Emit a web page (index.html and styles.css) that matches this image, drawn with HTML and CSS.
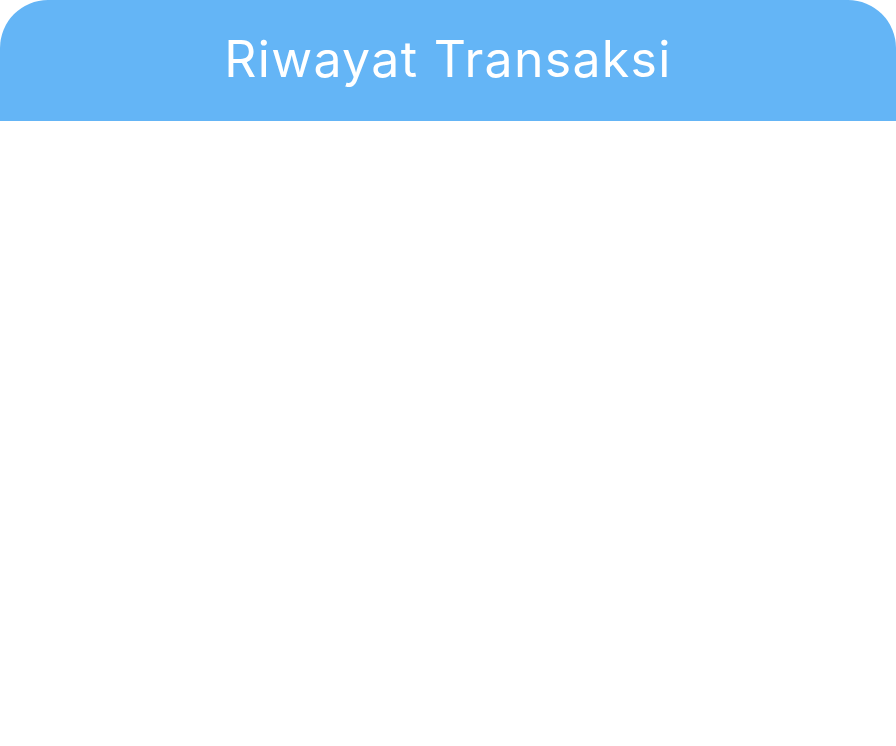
FILE: index.html
```html
<!DOCTYPE html>
<html lang="id">
<head>
<meta charset="utf-8">
<title>Riwayat Transaksi</title>
<link rel="stylesheet" href="styles.css">
</head>
<body>
<header class="header">
  <h1 class="title">Riwayat Transaksi</h1>
</header>
<main class="content"></main>
</body>
</html>
```
FILE: styles.css
```css
html, body {
  margin: 0;
  padding: 0;
  background: #ffffff;
}
body {
  font-family: "Inter", "Open Sans", sans-serif;
}
.header {
  height: 121px;
  background: #64b5f6;
  border-radius: 48px 48px 0 0;
  display: flex;
  align-items: center;
  justify-content: center;
}
.title {
  margin: 0;
  color: #ffffff;
  font-weight: 400;
  font-size: 50px;
  letter-spacing: 1.3px;
  line-height: 1;
  padding-bottom: 4px;
}
.content {
  min-height: 625px;
}
```
